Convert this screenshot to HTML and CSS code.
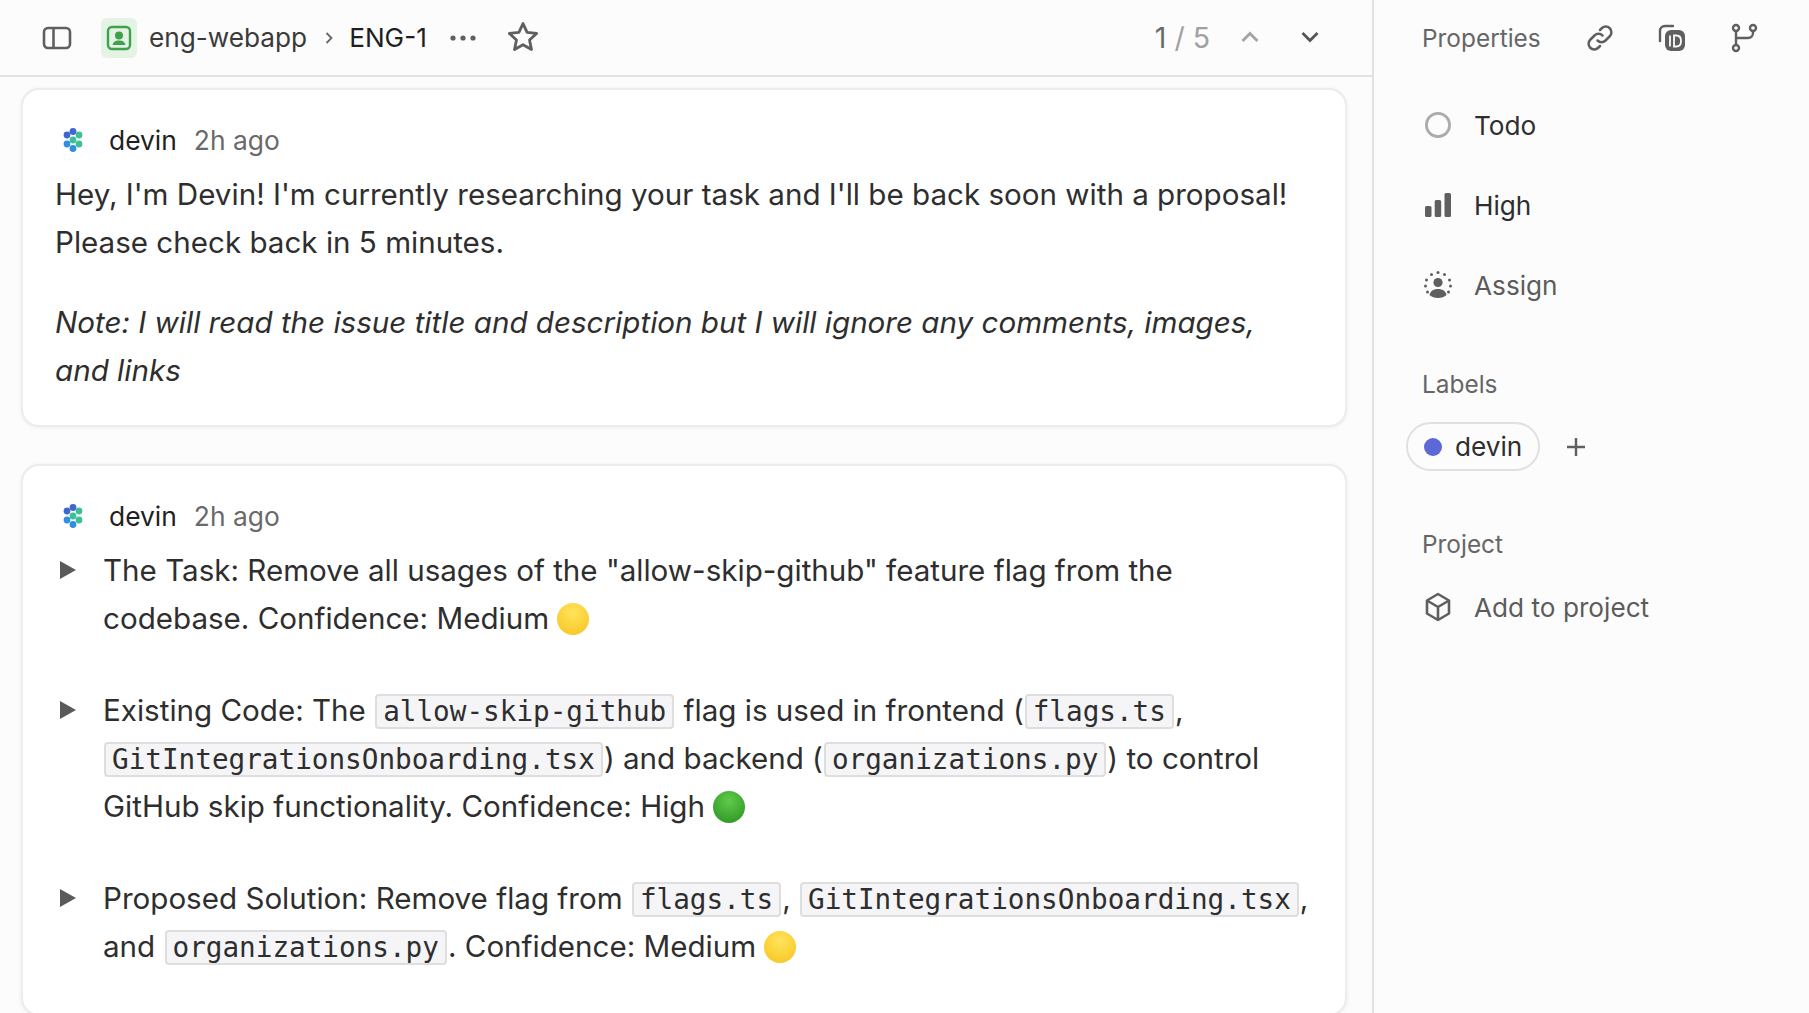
FILE: index.html
```html
<!DOCTYPE html>
<html lang="en">
<head>
  <meta charset="UTF-8">
  <title>ENG-1</title>
  <link rel="stylesheet" href="styles.css">
</head>
<body>
  <div class="app">
    <!-- ISSUE COLUMN -->
    <main class="issue">
      <header class="topbar">
        <svg class="ico-sidebar" width="30" height="24" viewBox="0 0 30 24" fill="none" stroke="#5f5f5f" stroke-width="2.6"><rect x="2" y="2" width="26" height="20" rx="4"/><path d="M11.5 2v20"/></svg>
        <span class="team-badge">
          <svg width="26" height="26" viewBox="0 0 26 26" fill="none"><rect x="2" y="2" width="22" height="22" rx="4" stroke="#3fa14a" stroke-width="2.4"/><circle cx="13" cy="10.5" r="4" fill="#3fa14a"/><path d="M6.5 20c.6-3.4 3-4.6 6.500-4.600s5.900 1.200 6.500 4.600z" fill="#3fa14a"/></svg>
        </span>
        <span class="crumb">eng-webapp</span>
        <svg class="crumb-sep" width="10" height="14" viewBox="0 0 10 14" fill="none" stroke="#666" stroke-width="1.800"><path d="M2.500 2l5 5-5 5"/></svg>
        <span class="crumb-current">ENG-1</span>
        <svg class="ico-more" width="28" height="8" viewBox="0 0 28 8" fill="#5f5f5f"><circle cx="4" cy="4" r="2.600"/><circle cx="14" cy="4" r="2.600"/><circle cx="24" cy="4" r="2.600"/></svg>
        <svg class="ico-star" width="34" height="34" viewBox="0 0 24 24" fill="none" stroke="#5f5f5f" stroke-width="2" stroke-linejoin="round"><path d="M12 2.500l2.900 6.200 6.700.8-5 4.600 1.400 6.700-6-3.400-6 3.400 1.400-6.700-5-4.600 6.700-.8z"/></svg>
        <div class="pager">
          <span class="pager-count"><b>1</b> / 5</span>
          <svg class="pager-up" width="20" height="12" viewBox="0 0 20 12" fill="none" stroke="#a3a3a3" stroke-width="2.800"><path d="M2.500 10L10 2.500 17.500 10"/></svg>
          <svg class="pager-down" width="20" height="12" viewBox="0 0 20 12" fill="none" stroke="#555" stroke-width="2.800"><path d="M2.500 2L10 9.500 17.500 2"/></svg>
        </div>
      </header>

      <div class="feed">
        <!-- Comment 1 -->
        <section class="card card-first">
          <div class="card-head">
            <svg class="devin-logo" width="28" height="28" viewBox="0 0 28 28"><g fill="#3f66d1"><circle cx="8" cy="9" r="3.400"/><circle cx="14" cy="5.500" r="3.400"/></g><g fill="#3fbf95"><circle cx="20" cy="9" r="3.400"/><circle cx="14" cy="14" r="3.400"/><circle cx="20" cy="18" r="3.400"/></g><g fill="#2f8fe0"><circle cx="8" cy="18" r="3.400"/><circle cx="14" cy="22.500" r="3.400"/></g></svg>
            <span class="author">devin</span>
            <span class="when">2h ago</span>
          </div>
          <p>Hey, I'm Devin! I'm currently researching your task and I'll be back soon with a proposal! Please check back in 5 minutes.</p>
          <p class="note"><em>Note: I will read the issue title and description but I will ignore any comments, images, and links</em></p>
        </section>

        <!-- Comment 2 -->
        <section class="card">
          <div class="card-head">
            <svg class="devin-logo" width="28" height="28" viewBox="0 0 28 28"><g fill="#3f66d1"><circle cx="8" cy="9" r="3.400"/><circle cx="14" cy="5.500" r="3.400"/></g><g fill="#3fbf95"><circle cx="20" cy="9" r="3.400"/><circle cx="14" cy="14" r="3.400"/><circle cx="20" cy="18" r="3.400"/></g><g fill="#2f8fe0"><circle cx="8" cy="18" r="3.400"/><circle cx="14" cy="22.500" r="3.400"/></g></svg>
            <span class="author">devin</span>
            <span class="when">2h ago</span>
          </div>
          <div class="toggle">
            <span class="arrow"></span>
            <p>The Task: Remove all usages of the "allow-skip-github" feature flag from the codebase. Confidence: Medium <span class="dot dot-yellow"></span></p>
          </div>
          <div class="toggle">
            <span class="arrow"></span>
            <p>Existing Code: The <code>allow-skip-github</code> flag is used in frontend (<code>flags.ts</code>, <code>GitIntegrationsOnboarding.tsx</code>) and backend (<code>organizations.py</code>) to control GitHub skip functionality. Confidence: High <span class="dot dot-green"></span></p>
          </div>
          <div class="toggle">
            <span class="arrow"></span>
            <p>Proposed Solution: Remove flag from <code>flags.ts</code>, <code>GitIntegrationsOnboarding.tsx</code>, and <code>organizations.py</code>. Confidence: Medium <span class="dot dot-yellow"></span></p>
          </div>
        </section>
      </div>
    </main>

    <!-- PROPERTIES -->
    <aside class="props">
      <div class="props-head">
        <span class="props-title">Properties</span>
        <svg class="props-link" width="30" height="30" viewBox="0 0 24 24" fill="none" stroke="#5f5f5f" stroke-width="2" stroke-linecap="round"><path d="M10 14a4.500 4.500 0 0 0 6.400 0l3.400-3.400a4.500 4.500 0 0 0-6.400-6.400l-1.400 1.400"/><path d="M14 10a4.500 4.500 0 0 0-6.400 0l-3.400 3.400a4.500 4.500 0 0 0 6.400 6.400l1.400-1.400"/></svg>
        <svg class="props-id" width="30" height="30" viewBox="0 0 30 30" fill="none"><path d="M16 3H8a5 5 0 0 0-5 5v10" stroke="#5f5f5f" stroke-width="2.400" stroke-linecap="round"/><rect x="8" y="7" width="20" height="21" rx="6" fill="#5f5f5f"/><path d="M13 12.500v11M17 12.500v11h2.500c3 0 4.500-2.300 4.500-5.500s-1.500-5.500-4.500-5.500z" stroke="#fcfcfc" stroke-width="1.800"/></svg>
        <svg class="props-branch" width="28" height="30" viewBox="0 0 28 30" fill="none" stroke="#5f5f5f" stroke-width="2.400"><circle cx="6" cy="5" r="3"/><circle cx="6" cy="25" r="3"/><circle cx="23" cy="5" r="3"/><path d="M6 8v14M23 8v2a5 5 0 0 1-5 5H6"/></svg>
      </div>

      <div class="prop-list">
        <div class="prop-row prop-dark">
          <span class="prop-icon"><svg width="28" height="28" viewBox="0 0 28 28" fill="none" stroke="#ababab" stroke-width="2.800"><circle cx="14" cy="14" r="11.600"/></svg></span>
          Todo
        </div>
        <div class="prop-row prop-dark">
          <span class="prop-icon"><svg width="28" height="28" viewBox="0 0 28 28" fill="#5f5f5f"><rect x="1" y="15" width="6.500" height="11" rx="1.500"/><rect x="10.700" y="9" width="6.500" height="17" rx="1.500"/><rect x="20.500" y="2" width="6.500" height="24" rx="1.500"/></svg></span>
          High
        </div>
        <div class="prop-row">
          <span class="prop-icon prop-icon-assign"><svg width="30" height="30" viewBox="0 0 30 30" fill="#5f5f5f"><circle cx="15" cy="12.500" r="4.600"/><path d="M6.500 25c.8-4 4-6 8.500-6s7.700 2 8.500 6c-2 1.800-5 3-8.500 3s-6.500-1.200-8.500-3z"/><circle cx="15" cy="2.500" r="1.500"/><circle cx="8.500" cy="4.500" r="1.500"/><circle cx="21.500" cy="4.500" r="1.500"/><circle cx="3.500" cy="10" r="1.500"/><circle cx="26.500" cy="10" r="1.500"/><circle cx="2.500" cy="16" r="1.500"/><circle cx="27.500" cy="16" r="1.500"/><circle cx="4.500" cy="22" r="1.500"/><circle cx="25.500" cy="22" r="1.500"/></svg></span>
          Assign
        </div>
      </div>

      <h4 class="props-label props-label-first">Labels</h4>
      <div class="label-row">
        <span class="label-pill"><span class="label-dot"></span>devin</span>
        <svg class="label-add" width="20" height="20" viewBox="0 0 20 20" stroke="#5f5f5f" stroke-width="2.400"><path d="M10 1v18M1 10h18"/></svg>
      </div>

      <h4 class="props-label props-label-project">Project</h4>
      <div class="prop-row prop-project">
        <span class="prop-icon"><svg width="28" height="30" viewBox="0 0 28 30" fill="none" stroke="#5f5f5f" stroke-width="2.600" stroke-linejoin="round"><path d="M14 2l11 6.500v13L14 28 3 21.500v-13z"/><path d="M3 8.500L14 15l11-6.500M14 15v13"/></svg></span>
        Add to project
      </div>
    </aside>
  </div>
</body>
</html>
```

FILE: styles.css
```css
/* ---------- BASE ---------- */
* {
  margin: 0;
  padding: 0;
  box-sizing: border-box;
}
html, body {
  height: 100%;
  overflow: hidden;
}
body {
  background-color: #fcfcfc;
  color: #2e2e2e;
  font-family: 'Inter', 'Liberation Sans', sans-serif;
}

.app {
  display: grid;
  grid-template-columns: 1374px 1fr;
  height: 1013px;
}

/* ---------- TOP BAR ---------- */
.issue {
  border-right: 2px solid #e2e2e2;
  overflow: hidden;
}
.topbar {
  height: 77px;
  border-bottom: 2px solid #e2e2e2;
  display: flex;
  align-items: center;
  padding-left: 42px;
  font-size: 26.2px;
}
.team-badge {
  width: 36px;
  height: 40px;
  margin-left: 29px;
  border-radius: 6px;
  background: #e4f3e5;
  display: flex;
  align-items: center;
  justify-content: center;
}
.crumb {
  margin-left: 12px;
  color: #3a3a3a;
}
.crumb-sep {
  margin-left: 17px;
}
.crumb-current {
  margin-left: 15px;
  color: #1f1f1f;
}
.ico-more {
  margin-left: 22px;
}
.ico-star {
  margin-left: 29px;
  margin-bottom: 2px;
}
.pager {
  margin-left: auto;
  margin-right: 52px;
  display: flex;
  align-items: center;
  font-size: 28.5px;
}
.pager-count {
  color: #a0a0a0;
}
.pager-count b {
  color: #6a6a6a;
  font-weight: 400;
}
.pager-up {
  margin-left: 30px;
  margin-bottom: 2px;
}
.pager-down {
  margin-left: 40px;
  margin-bottom: 2px;
}

/* ---------- CARDS ---------- */
.feed {
  padding: 11px 25px 0 21px;
}
.card {
  background: #fff;
  border: 2px solid #ececec;
  border-radius: 18px;
  box-shadow: 0 1px 4px rgba(0,0,0,0.06);
  padding: 34px 34px 0 32px;
  margin-bottom: 37px;
  font-size: 29.58px;
  line-height: 48px;
}
.card-first {
  height: 339px;
}
.card-head {
  display: flex;
  align-items: center;
  height: 32px;
  margin-bottom: 14px;
  font-size: 26.4px;
}
.devin-logo {
  margin-left: 4px;
  margin-right: 22px;
}
.author {
  color: #1f1f1f;
}
.when {
  margin-left: 17px;
  color: #6a6a6a;
}
.note {
  margin-top: 32px;
}

/* Toggles */
.toggle {
  display: flex;
  margin-bottom: 44px;
}
.arrow {
  flex: none;
  width: 0;
  height: 0;
  margin: 15px 27px 0 5px;
  border-left: 16px solid #5a5a5a;
  border-top: 9px solid transparent;
  border-bottom: 9px solid transparent;
}
code {
  display: inline-block;
  font-family: 'DejaVu Sans Mono', monospace;
  font-size: 27.66px;
  line-height: 31px;
  margin: 0 1px;
  padding: 0 6px;
  background: #f5f5f7;
  border: 2px solid #dedede;
  border-radius: 4px;
}
.dot {
  display: inline-block;
  width: 32px;
  height: 32px;
  border-radius: 50%;
  vertical-align: -6px;
}
.dot-yellow {
  background: radial-gradient(circle at 50% 30%, #ffe45c, #f7c21c);
}
.dot-green {
  background: radial-gradient(circle at 50% 30%, #5ecb4a, #2a8f22);
}

/* ---------- PROPERTIES ---------- */
.props {
  padding: 0 0 0 48px;
  font-size: 26.2px;
  color: #5c5c5c;
}
.props-head {
  height: 76px;
  display: flex;
  align-items: center;
  font-size: 24.4px;
  color: #666;
}
.props-link {
  margin-left: 44px;
}
.props-id {
  margin-left: 42px;
}
.props-branch {
  margin-left: 43px;
}
.prop-list {
  margin-top: 9px;
}
.prop-row {
  display: flex;
  align-items: center;
  height: 80px;
}
.prop-dark {
  color: #2e2e2e;
}
.prop-icon {
  width: 52px;
  padding-left: 2px;
  display: flex;
  align-items: center;
}
.prop-icon-assign {
  padding-left: 1px;
}
.props-label {
  font-size: 24.4px;
  font-weight: 400;
  color: #666;
}
.props-label-first {
  margin-top: 44px;
}
.label-row {
  display: flex;
  align-items: center;
  margin: 23px 0 0 -16px;
}
.label-pill {
  display: flex;
  align-items: center;
  height: 49px;
  padding: 0 16px;
  border: 2px solid #e0e0e0;
  border-radius: 25px;
  color: #2e2e2e;
}
.label-dot {
  width: 18px;
  height: 18px;
  margin-right: 13px;
  border-radius: 50%;
  background: #5b68d6;
}
.label-add {
  margin-left: 26px;
}
.props-label-project {
  margin-top: 58px;
}
.prop-project {
  margin-top: 8px;
}
```
